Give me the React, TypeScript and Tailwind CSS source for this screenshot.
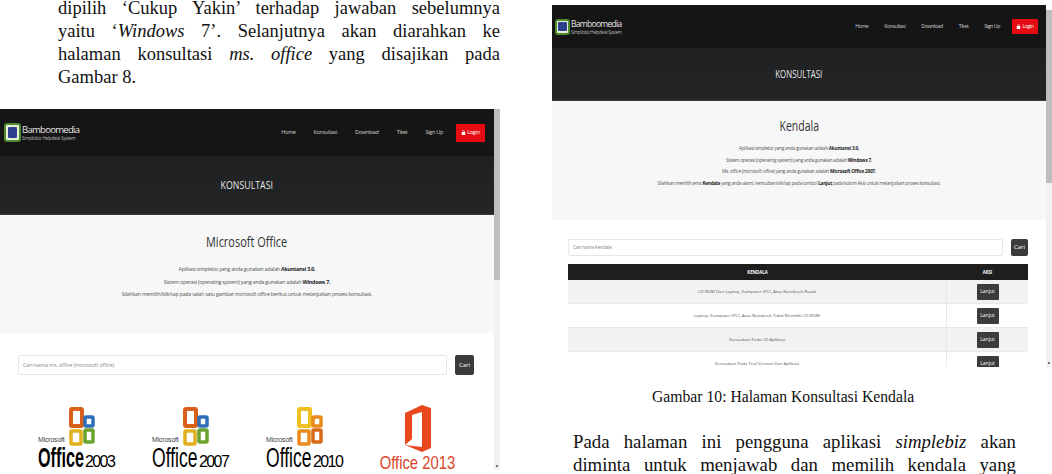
function Logo({ className }: { className: string }) {
  return (
    <div className={`${className} shrink-0 rounded-[3px] bg-[#e8f0d8] border-2 border-[#4f8a2f] flex items-center justify-center`}>
      <div className="w-3/4 h-3/4 bg-[#2f3f8f] rounded-[1px]" />
    </div>
  );
}

function Brand({ big }: { big: boolean }) {
  return (
    <div className="flex items-center gap-[1px]">
      <Logo className={big ? "w-[17px] h-[19px]" : "w-[15px] h-[16px]"} />
      <div className="flex flex-col text-[#e5e5e5] font-['Open_Sans',sans-serif]">
        <span className={big ? "text-[9.5px] leading-[11px] tracking-[-0.7px]" : "text-[8.5px] leading-[10px] tracking-[-0.7px]"}>Bamboomedia</span>
        <span className={big ? "text-[4.5px] leading-[6px] text-[#bbbbbb] tracking-[-0.2px]" : "text-[4.5px] leading-[6px] text-[#bbbbbb] tracking-[-0.3px]"}>Simpliobiz Helpdesk System</span>
      </div>
    </div>
  );
}

function LockIcon({ className }: { className: string }) {
  return (
    <svg viewBox="0 0 10 12" className={className} fill="#ffffff">
      <path d="M3 5V3.4a2 2 0 0 1 4 0V5h-1V3.4a1 1 0 0 0-2 0V5z" />
      <rect x="1.5" y="5" width="7" height="6" rx="0.6" />
    </svg>
  );
}

function TopNav({ big }: { big: boolean }) {
  return (
    <div className={big ? "h-[47px] bg-[#151515] flex items-center justify-between pl-[4px] pr-[9px] shrink-0" : "h-[43px] bg-[#151515] flex items-center justify-between pl-[3px] pr-[8px] shrink-0"}>
      <Brand big={big} />
      <div className={big ? "flex items-center gap-[18px] text-[5.5px] tracking-[-0.3px] text-[#cfcfcf] font-['Open_Sans',sans-serif]" : "flex items-center gap-[16px] text-[5.2px] tracking-[-0.4px] text-[#cfcfcf] font-['Open_Sans',sans-serif]"}>
        <span>Home</span>
        <span>Konsultasi</span>
        <span>Download</span>
        <span>Tiket</span>
        <span>Sign Up</span>
        <span className={big ? "ml-[-5px] bg-[#e60b12] text-white h-[18px] w-[29px] flex items-center justify-center gap-[1px]" : "ml-[-4px] bg-[#e60b12] text-white h-[15px] w-[26px] flex items-center justify-center gap-[1px]"}>
          <LockIcon className="w-[5px] h-[7px]" />
          Login
        </span>
      </div>
    </div>
  );
}

function Hero({ h, scale }: { h: string; scale: string }) {
  return (
    <div className={`${h} shrink-0 bg-gradient-to-b from-[#1f2022] to-[#232527] border-b border-[#3a3a3a] flex items-center justify-center text-[#e8e8e8] text-[11px] font-['Open_Sans',sans-serif]`}>
      <span className={scale}>KONSULTASI</span>
    </div>
  );
}

function SearchBar({ placeholder, className, buttonClass, textClass }: { placeholder: string; className: string; buttonClass: string; textClass: string }) {
  return (
    <div className={`flex items-center shrink-0 ${className}`}>
      <div className={`flex-1 h-full bg-white border border-[#e6e6e6] rounded-[2px] flex items-center pl-[4px] text-[#8a8a8a] ${textClass}`}>
        {placeholder}
      </div>
      <div className={`${buttonClass} h-full bg-[#3b3b3b] rounded-[2px] text-white text-[6px] flex items-center justify-center`}>Cari</div>
    </div>
  );
}

function Squares({ colors }: { colors: string[] }) {
  return (
    <svg viewBox="0 0 26 40" className="w-[26px] h-[40px] mb-[3px]" fill="none">
      <rect x="2" y="2" width="11" height="17" rx="1" stroke={colors[0]} strokeWidth="4" />
      <rect x="16" y="10" width="8" height="9" rx="1" stroke={colors[1]} strokeWidth="3.5" />
      <rect x="2" y="24" width="10" height="13" rx="1" stroke={colors[2]} strokeWidth="3.5" />
      <rect x="16" y="23" width="8" height="12" rx="1" stroke={colors[3]} strokeWidth="3.5" />
    </svg>
  );
}

function OfficeLogo({ year, colors, heavy }: { year: string; colors: string[]; heavy: boolean }) {
  return (
    <div className="w-[75px] flex flex-col font-['Liberation_Sans',sans-serif] text-black">
      <div className="flex items-end h-[45px]">
        <span className="text-[7px] leading-[8px] mb-[6px] w-[31px] tracking-[-0.2px] text-[#444444]">Microsoft</span>
        <Squares colors={colors} />
      </div>
      <div className="flex items-baseline -mt-[3px] h-[24px] whitespace-nowrap">
        <span className={heavy ? "inline-block w-[46px] origin-left scale-x-[0.6] text-[27px] leading-[22px] font-bold" : "inline-block w-[46px] origin-left scale-x-[0.65] text-[27px] leading-[22px]"}>Office</span>
        <span className="text-[16px] leading-[22px] ml-[1px] tracking-[-1.6px]">{year}</span>
      </div>
    </div>
  );
}

function Office2013() {
  return (
    <div className="w-[75px] flex flex-col items-center font-['Liberation_Sans',sans-serif]">
      <svg viewBox="0 0 26 47" className="w-[26px] h-[47px] shrink-0">
        <path d="M0 40 L0 8 L17 0 L26 3 L26 43 L17 47 L0 40 L17 42 L17 7 L7 10 L7 34 Z" fill="#e8481c" />
      </svg>
      <span className="text-[19px] leading-[20px] scale-x-[0.78] text-[#d9452a] whitespace-nowrap mt-[1px]">Office 2013</span>
    </div>
  );
}

function Scrollbar({ thumb }: { thumb: string }) {
  return (
    <div className="w-[6px] bg-[#f1f1f1] flex flex-col justify-between items-center">
      <div className={`${thumb} w-full bg-[#bdbdbd]`} />
      <span className="w-[2px] h-[2px] mb-[3px] bg-[#777777]" />
    </div>
  );
}

function LeftScreen() {
  return (
    <div className="w-[500px] h-[361px] shrink-0 flex overflow-hidden mt-[20px]">
      <div className="w-[494px] flex flex-col bg-white">
        <TopNav big={true} />
        <Hero h="h-[59px]" scale="scale-x-[0.8]" />
        <div className="h-[118px] shrink-0 bg-[#f7f7f7] flex flex-col items-center font-['Open_Sans',sans-serif] text-[#555555]">
          <h2 className="text-[15px] leading-[20px] mt-[16px] text-[#333333] scale-x-[0.73]">Microsoft Office</h2>
          <div className="mt-[12px] text-[5.3px] leading-[12.5px] tracking-[-0.23px] text-center">
            <p>Aplikasi simplebiz yang anda gunakan adalah <b className="text-[#222222]">Akuntansi 3.0.</b></p>
            <p>Sistem operasi (operating system) yang anda gunakan adalah <b className="text-[#222222]">Windows 7.</b></p>
            <p>Silahkan memilih/klik/tap pada salah satu gambar microsoft office berikut untuk melanjutkan proses konsultasi.</p>
          </div>
        </div>
        <div className="flex-1 flex flex-col font-['Open_Sans',sans-serif] overflow-hidden">
          <SearchBar placeholder="Cari nama ms. office (microsoft office)" className="h-[20px] mt-[22px] ml-[18px] mr-[20px] gap-[8px]" buttonClass="w-[19px]" textClass="text-[5.5px] tracking-[-0.15px]" />
          <div className="flex mt-[30px] ml-[38px] gap-[39px]">
            <OfficeLogo year="2003" colors={["#d9601a", "#2f6fb8", "#e0b020", "#6aa32e"]} heavy={true} />
            <OfficeLogo year="2007" colors={["#d9601a", "#2f6fb8", "#e0b020", "#6aa32e"]} heavy={false} />
            <OfficeLogo year="2010" colors={["#f0c020", "#e98a1c", "#ea8a1c", "#d96a18"]} heavy={false} />
            <Office2013 />
          </div>
        </div>
      </div>
      <Scrollbar thumb="h-[171px]" />
    </div>
  );
}

const rows = [
  "CD-ROM Dari Laptop, Komputer (PC), Atau Notebook Rusak",
  "Laptop, Komputer (PC), Atau Notebook Tidak Memiliki CD-ROM",
  "Kerusakan Pada CD Aplikasi",
  "Kerusakan Pada Trial Version Dari Aplikasi",
];

function RightScreen() {
  return (
    <div className="w-[500px] h-[362px] shrink-0 flex overflow-hidden">
      <div className="w-[494px] flex flex-col bg-white">
        <TopNav big={false} />
        <Hero h="h-[53px]" scale="scale-x-[0.72]" />
        <div className="h-[119px] shrink-0 bg-[#f7f7f7] flex flex-col items-center font-['Open_Sans',sans-serif] text-[#555555]">
          <h2 className="text-[15px] leading-[20px] mt-[14px] text-[#333333] scale-x-[0.7]">Kendala</h2>
          <div className="mt-[8px] text-[4.7px] leading-[11.7px] tracking-[-0.22px] text-center">
            <p>Aplikasi simplebiz yang anda gunakan adalah <b className="text-[#222222]">Akuntansi 3.0.</b></p>
            <p>Sistem operasi (operating system) yang anda gunakan adalah <b className="text-[#222222]">Windows 7.</b></p>
            <p>Ms. office (microsoft office) yang anda gunakan adalah <b className="text-[#222222]">Microsoft Office 2007.</b></p>
            <p>Silahkan memilih jenis <b className="text-[#222222]">Kendala</b> yang anda alami, kemudian klik/tap pada tombol <b className="text-[#222222]">Lanjut</b> pada kolom Aksi untuk melanjutkan proses konsultasi.</p>
          </div>
        </div>
        <div className="flex-1 flex flex-col pl-[16px] pr-[18px] font-['Open_Sans',sans-serif] overflow-hidden">
          <SearchBar placeholder="Cari nama kendala" className="h-[17px] mt-[19px] gap-[8px]" buttonClass="w-[17px]" textClass="text-[5px] tracking-[-0.3px]" />
          <div className="mt-[8px] shrink-0 text-[4.3px] text-[#555555]">
            <div className="flex h-[16px] bg-[#1e1e1e] text-white font-bold items-center text-center">
              <div className="w-[379px]">KENDALA</div>
              <div className="flex-1">AKSI</div>
            </div>
            {rows.map((row, i) => (
              <div key={row} className={i % 2 === 0 ? "flex h-[24px] bg-[#f2f2f2] items-center text-center border-b border-[#e8e8e8]" : "flex h-[24px] bg-white items-center text-center border-b border-[#e8e8e8]"}>
                <div className="w-[379px] h-full flex items-center justify-center border-r border-[#e8e8e8]">{row}</div>
                <div className="flex-1 flex justify-center">
                  <span className="w-[22px] h-[16px] bg-[#3b3b3b] rounded-[1px] text-white flex items-center justify-center text-[5px]">Lanjut</span>
                </div>
              </div>
            ))}
          </div>
        </div>
      </div>
      <div className="w-[6px] pt-[5px] flex">
        <Scrollbar thumb="h-[173px]" />
      </div>
    </div>
  );
}

const lineCls = "[text-align-last:justify]";

export default function App() {
  return (
    <div className="w-[1052px] h-[474px] overflow-hidden bg-white flex font-['Liberation_Serif',serif] text-[#111111]">
      <div className="w-[552px] shrink-0 pr-[52px] flex flex-col">
        <div className="ml-[58px] text-[18.5px] leading-[23px] shrink-0">
          <p className={`${lineCls} leading-[16px] mb-[4px]`}>dipilih ‘Cukup Yakin’ terhadap jawaban sebelumnya</p>
          <p className={lineCls}>yaitu ‘<i>Windows</i> 7’. Selanjutnya akan diarahkan ke</p>
          <p className={lineCls}>halaman konsultasi <i>ms. office</i> yang disajikan pada</p>
          <p>Gambar 8.</p>
        </div>
        <LeftScreen />
      </div>
      <div className="w-[500px] shrink-0 pt-[5px] flex flex-col">
        <RightScreen />
        <p className="text-[15.7px] leading-[16px] mt-[22px] ml-[100px] whitespace-nowrap shrink-0">Gambar 10: Halaman Konsultasi Kendala</p>
        <div className="ml-[21px] mr-[36px] mt-[25px] text-[18.8px] leading-[23px] shrink-0">
          <p className={lineCls}>Pada halaman ini pengguna aplikasi <i>simplebiz</i> akan</p>
          <p className={lineCls}>diminta untuk menjawab dan memilih kendala yang</p>
        </div>
      </div>
    </div>
  );
}
